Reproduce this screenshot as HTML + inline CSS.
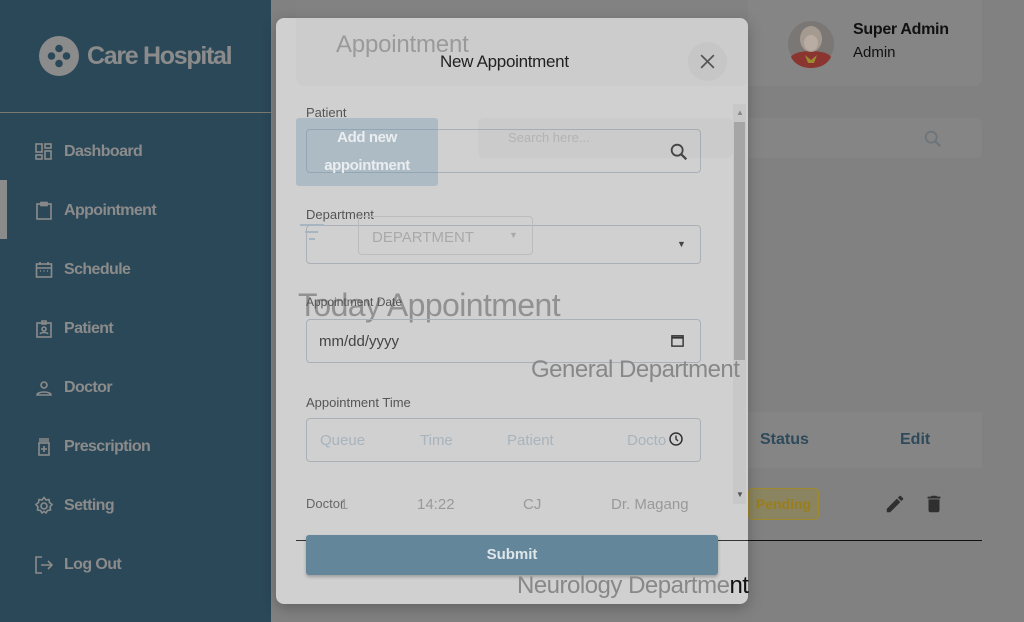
<!DOCTYPE html>
<html><head><meta charset="utf-8"><style>
*{margin:0;padding:0;box-sizing:border-box}
body{width:1024px;height:622px;overflow:hidden;background:#818181;font-family:"Liberation Sans",sans-serif;position:relative}
.a{position:absolute}
.side{left:0;top:0;width:271px;height:622px;background:#2b4858}
.nav{left:34px;font-size:16px;font-weight:bold;color:#8b8b8b;display:flex;align-items:center;gap:10px;letter-spacing:-0.6px}
.nav svg{width:20px;height:20px;fill:none;stroke:#8b8b8b;stroke-width:1.6}
.modal{left:276px;top:18px;width:472px;height:586px;background:#d0d0d0;border-radius:8px;box-shadow:0 4px 14px rgba(0,0,0,.25)}
.lbl{font-size:13px;color:#555}
.inp{border:1px solid #a9b0b7;border-radius:4px;height:44px;width:395px;left:306px}
.ghost{color:#a7b3bd}
</style></head><body>
<div class="a" style="left:296px;top:0;width:686px;height:86px;background:#858585;border-radius:0 0 8px 8px"></div>
<div class="a" style="left:478px;top:118px;width:504px;height:40px;background:#858585;border-radius:6px"></div>
<svg class="a" style="left:922px;top:128px" width="22" height="22" viewBox="0 0 24 24"><circle cx="10" cy="10" r="6" fill="none" stroke="#6d747a" stroke-width="2"/><path d="M14.5 14.5L20 20" stroke="#6d747a" stroke-width="2.4"/></svg>
<svg class="a" style="left:787px;top:19px" width="48" height="50" viewBox="0 0 48 50"><circle cx="24" cy="25" r="23" fill="#7b7774"/><path d="M4 38c4-8 36-8 40 0c-4 8-12 11-20 11S8 46 4 38z" fill="#8b3530"/><path d="M18 36l6 5 6-5-3 8h-6z" fill="#9a8a30"/><ellipse cx="24" cy="20" rx="11" ry="13" fill="#a59a90"/><ellipse cx="24" cy="24" rx="7" ry="8" fill="#b8aca3"/></svg>
<div class="a" style="left:853px;top:21px;font-size:16px;font-weight:bold;color:#111;letter-spacing:-0.3px">Super Admin</div>
<div class="a" style="left:853px;top:44px;font-size:15px;color:#111">Admin</div>
<div class="a" style="left:748px;top:412px;width:234px;height:56px;background:#858585"></div>
<div class="a" style="left:760px;top:431px;font-size:16px;font-weight:bold;color:#2e4a5a">Status</div>
<div class="a" style="left:900px;top:431px;font-size:16px;font-weight:bold;color:#2e4a5a">Edit</div>
<div class="a" style="left:748px;top:488px;width:71px;height:32px;background:#8a8560;border:1px solid #a08a30;border-radius:4px;color:#9a7d1c;font-size:14px;font-weight:bold;text-align:center;line-height:30px">Pending</div>
<svg class="a" style="left:884px;top:493px" width="22" height="22" viewBox="0 0 24 24"><path d="M3 17.25V21h3.75L17.81 9.94l-3.75-3.75L3 17.25zM20.71 7.04a1 1 0 000-1.41l-2.34-2.34a1 1 0 00-1.41 0l-1.83 1.83 3.75 3.75 1.83-1.83z" fill="#2f2f2f"/></svg>
<svg class="a" style="left:923px;top:492px" width="22" height="24" viewBox="0 0 24 24"><path d="M6 19c0 1.1.9 2 2 2h8c1.1 0 2-.9 2-2V7H6v12zM19 4h-3.5l-1-1h-5l-1 1H5v2h14V4z" fill="#2f2f2f"/></svg>
<div class="a" style="left:296px;top:540px;width:686px;height:1px;background:#111"></div>
<div class="a side"></div>
<svg class="a" style="left:39px;top:36px" width="40" height="40" viewBox="0 0 40 40"><circle cx="20" cy="20" r="20" fill="#8b8b8b"/><g fill="#2b4858"><circle cx="20" cy="12.5" r="3.8"/><circle cx="20" cy="27.5" r="3.8"/><circle cx="12.5" cy="20" r="3.8"/><circle cx="27.5" cy="20" r="3.8"/></g></svg>
<div class="a" style="left:87px;top:42px;font-size:25px;font-weight:bold;color:#8b8b8b;letter-spacing:-1.3px">Care Hospital</div>
<div class="a" style="left:0;top:112px;width:271px;height:1px;background:#7a7a72"></div>
<div class="a" style="left:0;top:180px;width:7px;height:59px;background:#8b8b8b"></div>
<div class="a nav" style="top:142px"><svg viewBox="0 0 20 20"><rect x="2" y="2" width="6" height="8"/><rect x="11" y="2" width="6" height="4"/><rect x="2" y="13" width="6" height="4"/><rect x="11" y="9" width="6" height="8"/></svg>Dashboard</div>
<div class="a nav" style="top:201px"><svg viewBox="0 0 20 20"><rect x="3" y="3" width="14" height="15"/><rect x="7" y="1.5" width="6" height="3"/></svg>Appointment</div>
<div class="a nav" style="top:260px"><svg viewBox="0 0 20 20"><rect x="2.5" y="4" width="15" height="13"/><path d="M2.5 8h15M6 2v3M14 2v3M6 11h1M9.5 11h1M13 11h1"/></svg>Schedule</div>
<div class="a nav" style="top:319px"><svg viewBox="0 0 20 20"><rect x="3" y="4" width="14" height="14"/><path d="M8 2h4v3H8z"/><circle cx="10" cy="10" r="2"/><path d="M6 15c1-2 7-2 8 0"/></svg>Patient</div>
<div class="a nav" style="top:378px"><svg viewBox="0 0 20 20"><circle cx="10" cy="7" r="3"/><path d="M3 17c0-4 14-4 14 0z"/></svg>Doctor</div>
<div class="a nav" style="top:437px"><svg viewBox="0 0 20 20"><path d="M5 2h10M5 4h10"/><rect x="5" y="6" width="10" height="12"/><path d="M10 9v6M7 12h6"/></svg>Prescription</div>
<div class="a nav" style="top:496px"><svg viewBox="0 0 20 20"><circle cx="10" cy="10" r="3"/><path d="M10 1.5l2 2.5 3-.5.5 3 2.5 2-2 2.5.5 3-3 .5-1.5 2.5-2-1.5-2 1.5-1.5-2.5-3-.5.5-3-2-2.5 2.5-2 .5-3 3 .5z"/></svg>Setting</div>
<div class="a nav" style="top:555px"><svg viewBox="0 0 20 20"><path d="M8 2H2v16h6M7 10h11M14 6l4 4-4 4"/></svg>Log Out</div>
<div class="a modal"></div>
<div class="a" style="left:296px;top:0;width:452px;height:86px;background:rgba(0,0,0,0.015);border-radius:0 0 8px 8px"></div>
<div class="a" style="left:336px;top:31px;font-size:24px;color:#9a9a9a;letter-spacing:-0.2px">Appointment</div>
<div class="a" style="left:440px;top:52px;font-size:17px;color:#222;letter-spacing:-0.3px">New Appointment</div>
<div class="a" style="left:688px;top:42px;width:39px;height:39px;border-radius:50%;background:#c6c6c6"></div>
<svg class="a" style="left:699px;top:53px" width="17" height="17" viewBox="0 0 16 16"><path d="M2 2l12 12M14 2L2 14" stroke="#555" stroke-width="1.6"/></svg>
<div class="a" style="left:733px;top:104px;width:13px;height:400px;background:#c8c8c8"></div>
<div class="a" style="left:734px;top:122px;width:11px;height:238px;background:#a6a6a6"></div>
<div class="a" style="left:736px;top:108px;font-size:8px;color:#888">▲</div>
<div class="a" style="left:736px;top:490px;font-size:8px;color:#555">▼</div>
<div class="a lbl" style="left:306px;top:105px">Patient</div>
<div class="a inp" style="top:129px"></div>
<div class="a" style="left:478px;top:118px;width:255px;height:40px;background:rgba(0,0,0,0.02);border-radius:6px"></div>
<div class="a" style="left:508px;top:130px;font-size:13px;color:#b3b3b3">Search here...</div>
<svg class="a" style="left:668px;top:141px" width="22" height="22" viewBox="0 0 24 24"><circle cx="10" cy="10" r="6" fill="none" stroke="#444" stroke-width="2"/><path d="M14.5 14.5L20 20" stroke="#444" stroke-width="2.4"/></svg>
<div class="a" style="left:296px;top:118px;width:142px;height:68px;background:rgba(110,150,175,0.35);border-radius:3px;color:#eaeef0;font-size:15px;font-weight:bold;text-align:center;line-height:28px;padding-top:6px;letter-spacing:-0.4px">Add new<br>appointment</div>
<div class="a lbl" style="left:306px;top:207px">Department</div>
<div class="a inp" style="top:225px;height:39px"></div>
<div class="a" style="left:358px;top:216px;width:175px;height:39px;border:1px solid #bcbcbc;border-radius:4px"></div>
<div class="a" style="left:372px;top:229px;font-size:15px;color:#a9a9a9">DEPARTMENT</div>
<div class="a" style="left:509px;top:230px;font-size:9px;color:#aaa">▼</div>
<div class="a" style="left:677px;top:239px;font-size:9px;color:#444">▼</div>
<div class="a" style="left:300px;top:224px;width:24px;height:2px;background:#a6b5c0"></div>
<div class="a" style="left:305px;top:231px;width:13px;height:2px;background:#a6b5c0"></div>
<div class="a" style="left:309px;top:238px;width:6px;height:2px;background:#a6b5c0"></div>
<div class="a" style="left:298px;top:287px;font-size:32px;color:#919191;letter-spacing:-0.6px">Today Appointment</div>
<div class="a lbl" style="left:306px;top:295px;font-size:12px">Appointment Date</div>
<div class="a inp" style="top:319px"></div>
<div class="a" style="left:319px;top:333px;font-size:15px;color:#444">mm/dd/yyyy</div>
<svg class="a" style="left:670px;top:333px" width="15" height="15" viewBox="0 0 16 16"><rect x="2" y="3" width="12" height="11" fill="none" stroke="#333" stroke-width="1.5"/><path d="M2 5h12" stroke="#333" stroke-width="2"/></svg>
<div class="a" style="left:531px;top:356px;font-size:24px;color:#888;letter-spacing:-0.5px">General Department</div>
<div class="a lbl" style="left:306px;top:395px">Appointment Time</div>
<div class="a inp" style="top:418px"></div>
<div class="a ghost" style="left:320px;top:432px;font-size:15px">Queue</div>
<div class="a ghost" style="left:420px;top:432px;font-size:15px">Time</div>
<div class="a ghost" style="left:507px;top:432px;font-size:15px">Patient</div>
<div class="a ghost" style="left:627px;top:432px;font-size:15px">Docto</div>
<svg class="a" style="left:668px;top:431px" width="16" height="16" viewBox="0 0 16 16"><circle cx="8" cy="8" r="6" fill="none" stroke="#333" stroke-width="1.5"/><path d="M8 4.5V8l2 2" fill="none" stroke="#333" stroke-width="1.4"/></svg>
<div class="a" style="left:306px;top:496px;font-size:13px;color:#666">Doctor</div>
<div class="a" style="left:340px;top:496px;font-size:15px;color:#999">1</div>
<div class="a" style="left:417px;top:496px;font-size:15px;color:#999">14:22</div>
<div class="a" style="left:523px;top:496px;font-size:15px;color:#999">CJ</div>
<div class="a" style="left:611px;top:496px;font-size:15px;color:#999">Dr. Magang</div>
<div class="a" style="left:296px;top:540px;width:452px;height:1px;background:#333"></div>
<div class="a" style="left:306px;top:535px;width:412px;height:40px;background:#64869b;border-radius:3px;box-shadow:0 2px 3px rgba(0,0,0,.25);color:#dfe6ea;font-size:15px;font-weight:bold;text-align:center;line-height:40px">Submit</div>
<div class="a" style="left:517px;top:572px;font-size:24px;color:#888;letter-spacing:-0.5px">Neurology Departme<span style="color:#111">nt</span></div>
</body></html>
